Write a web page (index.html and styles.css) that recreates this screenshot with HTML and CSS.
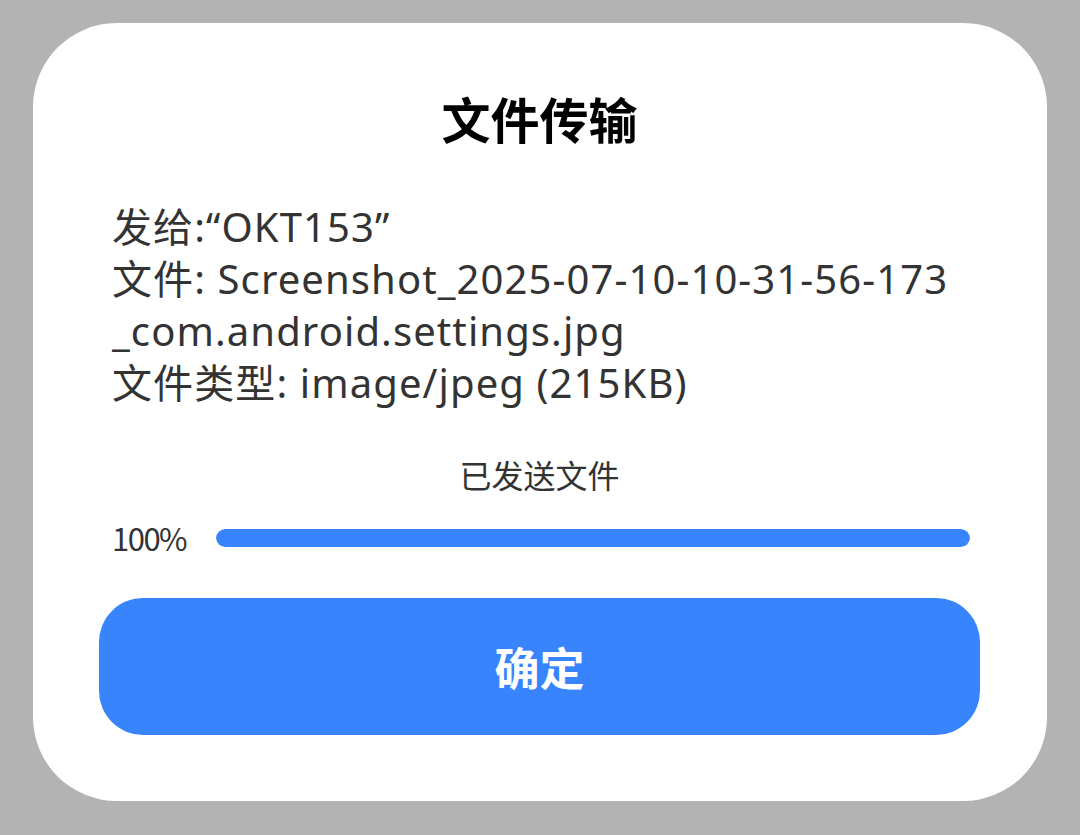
FILE: index.html
```html
<!DOCTYPE html>
<html lang="zh-CN">
<head>
<meta charset="UTF-8" />
<meta name="viewport" content="width=device-width, initial-scale=1" />
<title>文件传输</title>
<link rel="stylesheet" href="styles.css">
</head>
<body>
  <div class="dialog">
    <h1 class="title">文件传输</h1>

    <div class="info">
      <div>发给:“OKT153”</div>
      <div>文件: Screenshot_2025-07-10-10-31-56-173<br>_com.android.settings.jpg</div>
      <div>文件类型: image/jpeg (215KB)</div>
    </div>

    <div class="status">已发送文件</div>

    <div class="progress-row">
      <span class="percent">100%</span>
      <div class="track"><div class="fill" style="width:100%"></div></div>
    </div>

    <button class="ok-btn">确定</button>
  </div>
</body>
</html>
```

FILE: styles.css
```css
body {
  margin: 0;
  background: #b3b3b3;
  font-family: "Noto Sans", "Noto Sans CJK SC", sans-serif;
  color: #333;
}
.dialog {
  box-sizing: border-box;
  width: 1014px;
  height: 778px;
  margin: 23px 0 0 33px;
  background: #fff;
  border-radius: 84px;
  padding: 0 67px 0 66px;
  display: flex;
  flex-direction: column;
}
.title {
  margin: 62px 0 0;
  text-align: center;
  font-family: "Noto Sans CJK SC", sans-serif;
  font-size: 49px;
  line-height: 66px;
  font-weight: bold;
  color: #000;
}
.info {
  margin-top: 50px;
  padding-left: 13px;
  font-size: 40px;
  line-height: 52px;
  letter-spacing: 1.1px;
  color: #333;
}
.status {
  margin-top: 43px;
  text-align: center;
  font-family: "Noto Sans CJK SC", sans-serif;
  font-size: 32px;
  line-height: 44px;
}
.progress-row {
  display: flex;
  align-items: center;
  gap: 30px;
  margin-top: 22px;
  padding-left: 13px;
  padding-right: 10px;
}
.percent {
  font-family: "Noto Sans CJK SC", sans-serif;
  font-size: 31px;
  letter-spacing: -1.5px;
  line-height: 40px;
}
.track {
  flex: 1;
  height: 18px;
  border-radius: 9px;
  background: #e6e6e6;
  overflow: hidden;
}
.fill {
  height: 100%;
  background: #3784fc;
  border-radius: 9px;
}
.ok-btn {
  margin-top: 40px;
  height: 137px;
  border: none;
  border-radius: 44px;
  background: #3784fc;
  color: #fff;
  font-family: "Noto Sans CJK SC", sans-serif;
  font-size: 45px;
  font-weight: bold;
  cursor: pointer;
}
```
